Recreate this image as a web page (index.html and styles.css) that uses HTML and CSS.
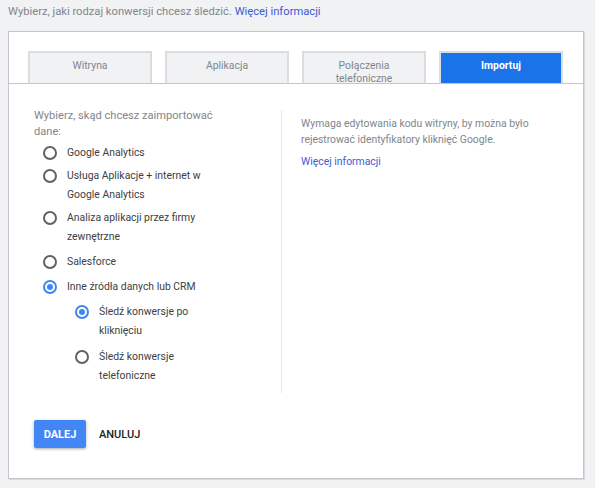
FILE: index.html
```html
<!DOCTYPE html>
<html lang="pl">
<head>
<meta charset="utf-8">
<link rel="stylesheet" href="styles.css">
</head>
<body>
<div class="page">
  <p class="intro">Wybierz, jaki rodzaj konwersji chcesz śledzić. <a class="link" href="#">Więcej informacji</a></p>
  <div class="card">
    <div class="tabs">
      <div class="tab">Witryna</div>
      <div class="tab">Aplikacja</div>
      <div class="tab">Połączenia telefoniczne</div>
      <div class="tab tab-active">Importuj</div>
    </div>
    <div class="body">
      <div class="col-left">
        <p class="question">Wybierz, skąd chcesz zaimportować dane:</p>
        <div class="options">
          <div class="opt"><span class="radio"></span><span class="label">Google Analytics</span></div>
          <div class="opt"><span class="radio"></span><span class="label">Usługa Aplikacje + internet w Google Analytics</span></div>
          <div class="opt"><span class="radio"></span><span class="label">Analiza aplikacji przez firmy zewnętrzne</span></div>
          <div class="opt spaced"><span class="radio"></span><span class="label">Salesforce</span></div>
          <div class="opt spaced"><span class="radio checked"></span><span class="label">Inne źródła danych lub CRM</span></div>
          <div class="opt spaced sub"><span class="radio checked"></span><span class="label">Śledź konwersje po kliknięciu</span></div>
          <div class="opt spaced sub"><span class="radio"></span><span class="label">Śledź konwersje telefoniczne</span></div>
        </div>
      </div>
      <div class="col-right">
        <p class="desc">Wymaga edytowania kodu witryny, by można było rejestrować identyfikatory kliknięć Google.</p>
        <a class="link small" href="#">Więcej informacji</a>
      </div>
    </div>
    <div class="actions">
      <button class="btn-primary">DALEJ</button>
      <button class="btn-flat">ANULUJ</button>
    </div>
  </div>
</div>
</body>
</html>
```

FILE: styles.css
```css
* { box-sizing: border-box; }
html, body { margin: 0; padding: 0; }
body {
  background: #f1f2f4;
  font-family: Roboto, "Liberation Sans", sans-serif;
  width: 595px;
  height: 488px;
  overflow: hidden;
}
.page { padding: 4px 11px 0 8px; }
.intro {
  margin: 0;
  font-size: 11.2px;
  line-height: 16px;
  color: #80868b;
}
.link { color: #4159d5; text-decoration: none; }
.card {
  margin-top: 11px;
  background: #fff;
  border: 1px solid #c4c6c9;
  box-shadow: 1px 1px 0 #d8d9dc;
  height: 448px;
}
.tabs {
  display: grid;
  grid-template-columns: repeat(4, 124px);
  column-gap: 13px;
  padding: 19px 0 0 19px;
  border-bottom: 1px solid #c4c6c9;
}
.tab {
  height: 32px;
  overflow: hidden;
  border: 2px solid #dcdde0;
  border-bottom: none;
  background: #f1f2f4;
  color: #80868b;
  font-size: 10.4px;
  line-height: 13px;
  text-align: center;
  padding: 6px 24px 0;
}
.tab-active {
  background: #1a73e8;
  color: #fff;
  font-weight: 700;
}
.body {
  display: flex;
  padding-top: 26px;
}
.col-left {
  width: 273px;
  border-right: 1px solid #e6e6e8;
  padding: 0 0 8px 25px;
}
.question {
  margin: -2px 0 0;
  width: 190px;
  font-size: 11.1px;
  line-height: 16px;
  color: #80868b;
}
.options {
  width: 175px;
  margin-top: 3px;
  display: flex;
  flex-direction: column;
  gap: 4px;
}
.opt {
  display: flex;
  align-items: flex-start;
  padding-left: 9px;
}
.opt.spaced { margin-top: 2px; }
.opt.sub { padding-left: 41px; }
.opt.sub:last-child { margin-top: 3px; }
.radio {
  flex: none;
  width: 14px;
  height: 14px;
  margin-top: 2.5px;
  margin-right: 10px;
  border: 2px solid #5f6368;
  border-radius: 50%;
  position: relative;
}
.radio.checked { border-color: #4285f4; }
.radio.checked::after {
  content: "";
  position: absolute;
  left: 2px;
  top: 2px;
  width: 6px;
  height: 6px;
  border-radius: 50%;
  background: #4285f4;
}
.label {
  font-size: 10.4px;
  line-height: 19px;
  color: #3c4043;
}
.col-right {
  flex: 1;
  padding: 6px 0 0 19px;
}
.desc {
  margin: 0;
  width: 240px;
  font-size: 10.4px;
  line-height: 16px;
  color: #80868b;
}
.link.small {
  display: block;
  margin-top: 6px;
  font-size: 10.4px;
  line-height: 16px;
}
.actions {
  display: flex;
  align-items: center;
  gap: 13px;
  padding: 27px 0 0 25px;
}
.btn-primary {
  width: 52px;
  height: 28px;
  border: none;
  border-radius: 2px;
  background: #4285f4;
  color: #fff;
  font-family: Roboto, "Liberation Sans", sans-serif;
  font-size: 11px;
  font-weight: 700;
  padding: 0;
  box-shadow: 0 1px 3px rgba(0,0,0,.35);
}
.btn-flat {
  border: none;
  background: none;
  padding: 0;
  color: #202124;
  font-family: Roboto, "Liberation Sans", sans-serif;
  font-size: 11px;
  font-weight: 500;
}
```
